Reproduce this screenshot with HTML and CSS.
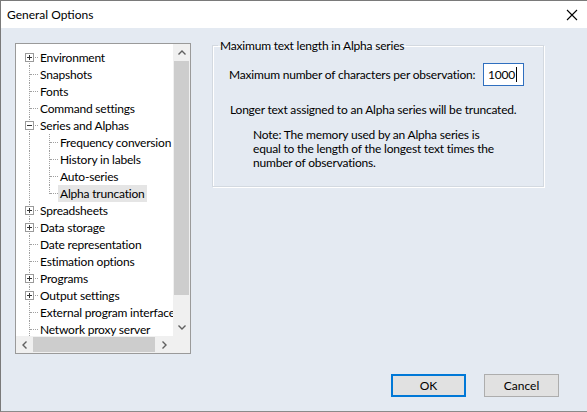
FILE: index.html
```html
<!DOCTYPE html>
<html>
<head>
<meta charset="utf-8">
<link rel="stylesheet" href="styles.css">
</head>
<body>
<div class="window">
  <div class="titlebar">
    <span class="title">General Options</span>
    <svg class="close" width="12" height="12" viewBox="0 0 12 12"><path d="M1 1 L11 11 M11 1 L1 11" stroke="#000" stroke-width="1.1" fill="none"/></svg>
  </div>
  <div class="client">
    <div class="main">
      <div class="treebox">
        <div class="treeview">
          <div class="row"><span class="g first"><span class="pm"></span></span><span class="label">Environment</span></div>
          <div class="row"><span class="g"></span><span class="label">Snapshots</span></div>
          <div class="row"><span class="g"></span><span class="label">Fonts</span></div>
          <div class="row"><span class="g"></span><span class="label">Command settings</span></div>
          <div class="row"><span class="g"><span class="pm minus"></span></span><span class="label">Series and Alphas</span></div>
          <div class="row"><span class="g v"></span><span class="g"></span><span class="label">Frequency conversion</span></div>
          <div class="row"><span class="g v"></span><span class="g"></span><span class="label">History in labels</span></div>
          <div class="row"><span class="g v"></span><span class="g"></span><span class="label">Auto-series</span></div>
          <div class="row"><span class="g v"></span><span class="g last"></span><span class="label sel">Alpha truncation</span></div>
          <div class="row"><span class="g"><span class="pm"></span></span><span class="label">Spreadsheets</span></div>
          <div class="row"><span class="g"><span class="pm"></span></span><span class="label">Data storage</span></div>
          <div class="row"><span class="g"></span><span class="label">Date representation</span></div>
          <div class="row"><span class="g"></span><span class="label">Estimation options</span></div>
          <div class="row"><span class="g"><span class="pm"></span></span><span class="label">Programs</span></div>
          <div class="row"><span class="g"><span class="pm"></span></span><span class="label">Output settings</span></div>
          <div class="row"><span class="g"></span><span class="label">External program interface</span></div>
          <div class="row"><span class="g"></span><span class="label">Network proxy server</span></div>
        </div>
        <div class="vscroll">
          <div class="sbtn"><svg width="8" height="5" viewBox="0 0 8 5"><path d="M0.5 4.5 L4 1 L7.5 4.5" stroke="#606060" stroke-width="1.4" fill="none"/></svg></div>
          <div class="vtrack"><div class="vthumb"></div></div>
          <div class="sbtn"><svg width="8" height="5" viewBox="0 0 8 5"><path d="M0.5 0.5 L4 4 L7.5 0.5" stroke="#606060" stroke-width="1.4" fill="none"/></svg></div>
        </div>
        <div class="hscroll">
          <div class="sbtn"><svg width="5" height="8" viewBox="0 0 5 8"><path d="M4.5 0.5 L1 4 L4.5 7.5" stroke="#606060" stroke-width="1.4" fill="none"/></svg></div>
          <div class="htrack"><div class="hthumb"></div></div>
          <div class="sbtn"><svg width="5" height="8" viewBox="0 0 5 8"><path d="M0.5 0.5 L4 4 L0.5 7.5" stroke="#606060" stroke-width="1.4" fill="none"/></svg></div>
        </div>
        <div class="corner"></div>
      </div>
      <fieldset class="group">
        <legend>Maximum text length in Alpha series</legend>
        <div class="field">
          <span class="flabel">Maximum number of characters per observation:</span>
          <div class="input">1000<span class="caret"></span></div>
        </div>
        <p class="info">Longer text assigned to an Alpha series will be truncated.</p>
        <p class="note">Note: The memory used by an Alpha series is<br>equal to the length of the longest text times the<br>number of observations.</p>
      </fieldset>
    </div>
    <div class="buttons">
      <button class="btn default">OK</button>
      <button class="btn">Cancel</button>
    </div>
  </div>
</div>
</body>
</html>
```
FILE: styles.css
```css
* { box-sizing: border-box; }
html, body { margin: 0; padding: 0; background: #ffffff; }
body {
  font-family: "Lato", "Noto Sans", sans-serif;
  font-size: 12px;
  letter-spacing: -0.2px;
  color: #000;
}
.window {
  width: 587px;
  height: 412px;
  display: flex;
  flex-direction: column;
  border-top: 1px solid #7a7a7a;
  border-left: 1px solid #7a7a7a;
  border-bottom: 1px solid #8a8a8a;
  background: #e4eaf2;
}
.titlebar {
  height: 27px;
  flex: none;
  background: #fff;
  display: flex;
  align-items: center;
  padding-left: 6px;
  padding-right: 8px;
  justify-content: space-between;
}
.title { font-size: 12px; letter-spacing: 0; }
.close { display: block; margin-right: 1px; }
.client {
  flex: 1;
  display: flex;
  flex-direction: column;
}
.main {
  display: flex;
  align-items: flex-start;
}
.treebox {
  margin-left: 14px;
  margin-top: 15px;
  width: 176px;
  height: 311px;
  border: 1px solid #9a9a9a;
  background: #fff;
  display: grid;
  grid-template-columns: 157px 17px;
  grid-template-rows: 292px 17px;
}
.treeview {
  overflow: hidden;
  padding: 5px 0 0 2px;
  white-space: nowrap;
}
.row {
  display: flex;
  height: 17px;
  align-items: center;
}
.g {
  position: relative;
  flex: none;
  width: 20px;
  height: 17px;
}
.g::before {
  content: "";
  position: absolute;
  left: 11px;
  top: 0;
  bottom: 0;
  border-left: 1px dotted #a0a0a0;
}
.g::after {
  content: "";
  position: absolute;
  left: 12px;
  width: 8px;
  top: 8px;
  border-top: 1px dotted #a0a0a0;
}
.g.first::before { top: 8px; }
.g.last::before { bottom: 8px; }
.g.v::after { display: none; }
.pm {
  position: absolute;
  left: 7px;
  top: 4px;
  width: 9px;
  height: 9px;
  border: 1px solid #9a9a9a;
  background: #fff;
  z-index: 1;
}
.pm::before {
  content: "";
  position: absolute;
  left: 1px;
  top: 3px;
  width: 5px;
  height: 1px;
  background: #333;
}
.pm::after {
  content: "";
  position: absolute;
  left: 3px;
  top: 1px;
  width: 1px;
  height: 5px;
  background: #333;
}
.pm.minus::after { display: none; }
.label {
  padding: 0 2px;
  height: 17px;
  line-height: 17px;
}
.label.sel { background: #e5e5e5; }
.vscroll {
  background: #f0f0f0;
  display: flex;
  flex-direction: column;
}
.sbtn {
  flex: none;
  width: 17px;
  height: 17px;
  display: flex;
  align-items: center;
  justify-content: center;
}
.vtrack { flex: 1; padding: 0 1px; }
.vthumb { width: 15px; height: 234px; background: #cdcdcd; }
.hscroll {
  background: #f0f0f0;
  display: flex;
}
.htrack { flex: 1; padding: 1px 0; }
.hthumb { height: 15px; width: 122px; background: #cdcdcd; }
.corner { background: #f0f0f0; }
.group {
  margin: 9px 0 0 21px;
  width: 332px;
  height: 150px;
  border: 1px solid #d3d9e0;
  box-shadow: inset 1px 1px 0 #fff, 1px 1px 0 #fff;
  padding: 0 19px 0 16px;
}
.group legend {
  padding: 0 2px;
  margin-left: -11px;
  line-height: 17px;
  white-space: nowrap;
}
.field {
  margin-top: 9px;
  display: flex;
  align-items: center;
  justify-content: space-between;
}
.flabel { white-space: nowrap; }
.input {
  width: 41px;
  height: 23px;
  border: 1px solid #2f6fbf;
  background: #fff;
  display: flex;
  align-items: center;
  justify-content: flex-end;
  padding-right: 6px;
}
.caret {
  display: inline-block;
  width: 1px;
  height: 15px;
  background: #000;
  margin-left: 1px;
}
.info {
  margin: 16px 0 0 1px;
  line-height: 16px;
  white-space: nowrap;
}
.note {
  margin: 10px 0 0 24px;
  line-height: 14px;
  white-space: nowrap;
}
.buttons {
  margin-top: auto;
  display: flex;
  justify-content: flex-end;
  gap: 18px;
  padding: 0 28px 14px 0;
}
.btn {
  width: 75px;
  height: 23px;
  font: inherit;
  font-size: 12px;
  color: #000;
  background: #e1e1e1;
  border: 1px solid #adadad;
  padding: 0;
}
.btn.default {
  border-color: #0078d7;
  box-shadow: inset 0 0 0 1px #0078d7;
}
```
